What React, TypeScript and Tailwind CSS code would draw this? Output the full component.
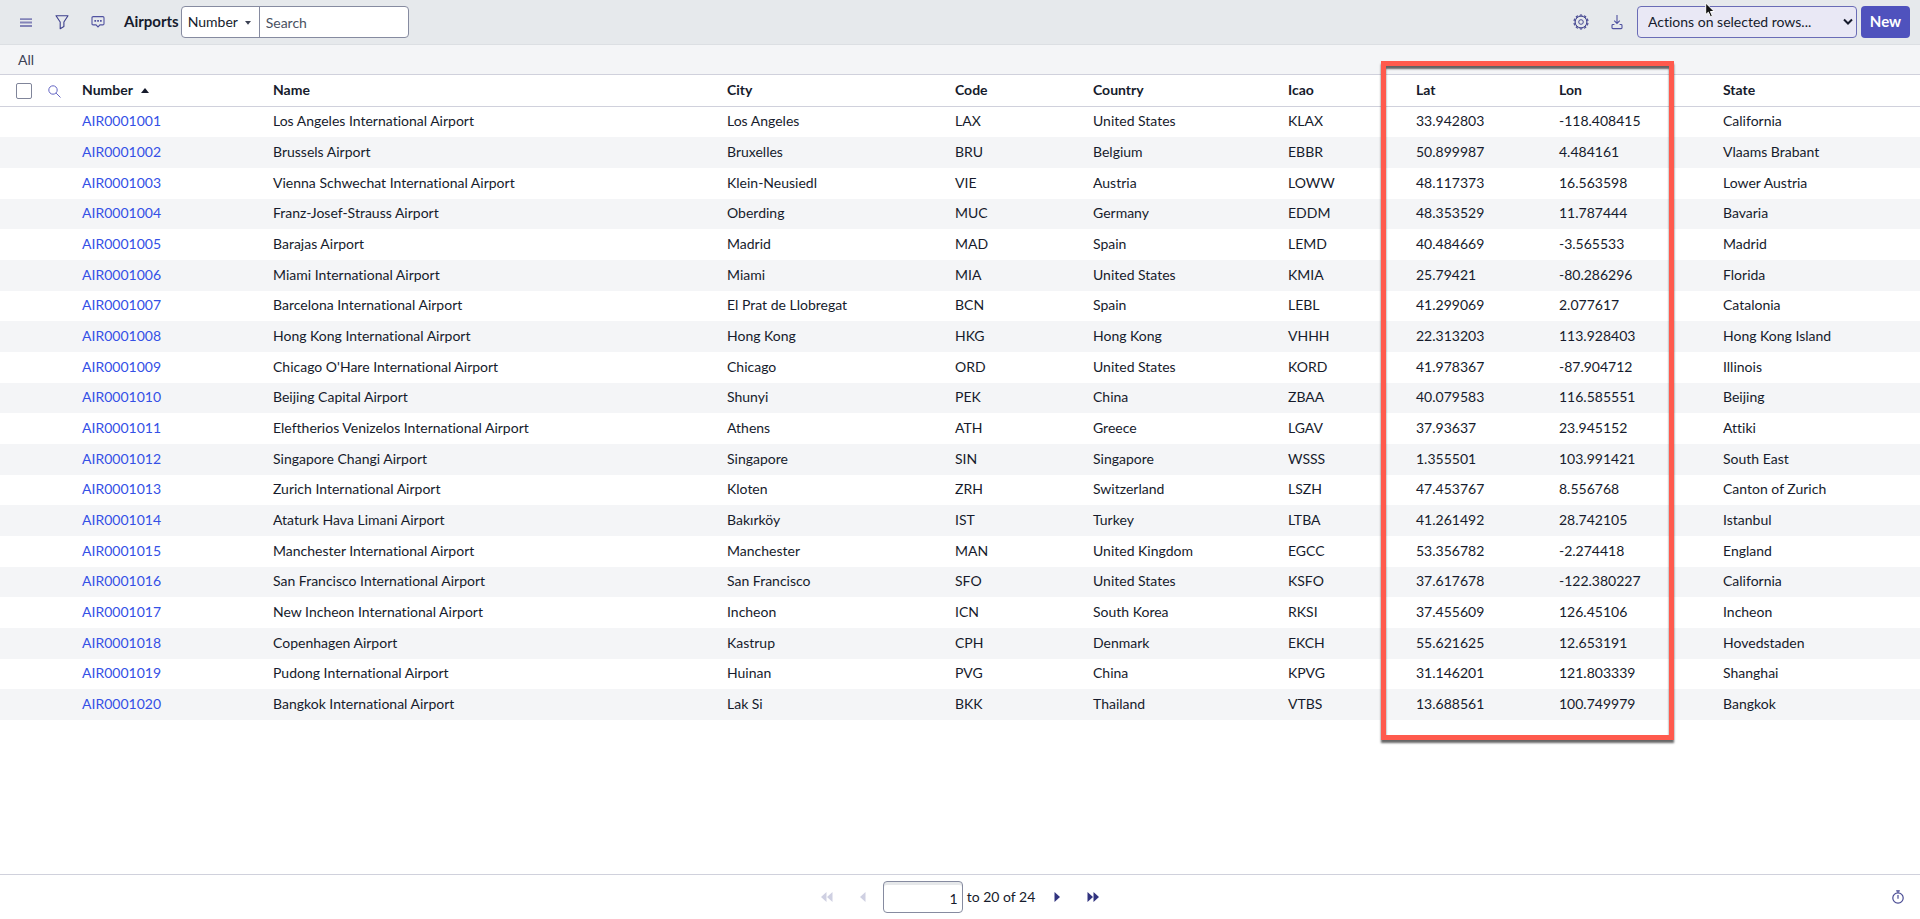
import React from "react";

const airports: string[][] = [
  ["AIR0001001", "Los Angeles International Airport", "Los Angeles", "LAX", "United States", "KLAX", "33.942803", "-118.408415", "California"],
  ["AIR0001002", "Brussels Airport", "Bruxelles", "BRU", "Belgium", "EBBR", "50.899987", "4.484161", "Vlaams Brabant"],
  ["AIR0001003", "Vienna Schwechat International Airport", "Klein-Neusiedl", "VIE", "Austria", "LOWW", "48.117373", "16.563598", "Lower Austria"],
  ["AIR0001004", "Franz-Josef-Strauss Airport", "Oberding", "MUC", "Germany", "EDDM", "48.353529", "11.787444", "Bavaria"],
  ["AIR0001005", "Barajas Airport", "Madrid", "MAD", "Spain", "LEMD", "40.484669", "-3.565533", "Madrid"],
  ["AIR0001006", "Miami International Airport", "Miami", "MIA", "United States", "KMIA", "25.79421", "-80.286296", "Florida"],
  ["AIR0001007", "Barcelona International Airport", "El Prat de Llobregat", "BCN", "Spain", "LEBL", "41.299069", "2.077617", "Catalonia"],
  ["AIR0001008", "Hong Kong International Airport", "Hong Kong", "HKG", "Hong Kong", "VHHH", "22.313203", "113.928403", "Hong Kong Island"],
  ["AIR0001009", "Chicago O'Hare International Airport", "Chicago", "ORD", "United States", "KORD", "41.978367", "-87.904712", "Illinois"],
  ["AIR0001010", "Beijing Capital Airport", "Shunyi", "PEK", "China", "ZBAA", "40.079583", "116.585551", "Beijing"],
  ["AIR0001011", "Eleftherios Venizelos International Airport", "Athens", "ATH", "Greece", "LGAV", "37.93637", "23.945152", "Attiki"],
  ["AIR0001012", "Singapore Changi Airport", "Singapore", "SIN", "Singapore", "WSSS", "1.355501", "103.991421", "South East"],
  ["AIR0001013", "Zurich International Airport", "Kloten", "ZRH", "Switzerland", "LSZH", "47.453767", "8.556768", "Canton of Zurich"],
  ["AIR0001014", "Ataturk Hava Limani Airport", "Bakırköy", "IST", "Turkey", "LTBA", "41.261492", "28.742105", "Istanbul"],
  ["AIR0001015", "Manchester International Airport", "Manchester", "MAN", "United Kingdom", "EGCC", "53.356782", "-2.274418", "England"],
  ["AIR0001016", "San Francisco International Airport", "San Francisco", "SFO", "United States", "KSFO", "37.617678", "-122.380227", "California"],
  ["AIR0001017", "New Incheon International Airport", "Incheon", "ICN", "South Korea", "RKSI", "37.455609", "126.45106", "Incheon"],
  ["AIR0001018", "Copenhagen Airport", "Kastrup", "CPH", "Denmark", "EKCH", "55.621625", "12.653191", "Hovedstaden"],
  ["AIR0001019", "Pudong International Airport", "Huinan", "PVG", "China", "KPVG", "31.146201", "121.803339", "Shanghai"],
  ["AIR0001020", "Bangkok International Airport", "Lak Si", "BKK", "Thailand", "VTBS", "13.688561", "100.749979", "Bangkok"],
];

const columns = ["Number", "Name", "City", "Code", "Country", "Icao", "Lat", "Lon", "State"];

function GearIcon() {
  const teeth = Array.from({ length: 10 }, (_, i) => i * 36);
  return (
    <svg width="16" height="16" viewBox="0 0 16 16" fill="none" stroke="#4a4c94" strokeWidth="1">
      <circle cx="8" cy="8" r="2.3" />
      <circle cx="8" cy="8" r="5.8" />
      {teeth.map((a) => (
        <path key={a} d="M7 2.2 7.2 .9h1.6L9 2.2" transform={`rotate(${a} 8 8)`} />
      ))}
    </svg>
  );
}

function Toolbar() {
  return (
    <header className="flex h-[45px] items-start border-b border-[#dcdfe3] bg-[#e6e9ec] pt-1.5 pr-2.5 pl-3">
      <div className="flex h-8 items-center gap-2">
        <button aria-label="List controls" className="flex size-7 items-center justify-center">
          <svg width="12" height="9" viewBox="0 0 12 9" fill="#8384b8">
            <path d="M0 .2h12v1.9H0zM0 3.6h12v1.9H0zM0 7h12v1.9H0z" />
          </svg>
        </button>
        <button aria-label="Filter" className="flex size-7 items-center justify-center">
          <svg width="14" height="16" viewBox="0 0 14 16" fill="none" stroke="#3d3f8c" strokeWidth="1.1">
            <path d="M1 1.8h12L8.9 8v4.6L5.2 14.7V8z" strokeLinejoin="round" />
          </svg>
        </button>
        <button aria-label="Activity stream" className="flex size-7 items-center justify-center">
          <svg width="14" height="14" viewBox="0 0 14 14" fill="none" stroke="#5052a0" strokeWidth="1.1">
            <path d="M2.2 1.6h9.6q1.2 0 1.2 1.2v5.9q0 1.2-1.2 1.2H9L7 12 5 9.900H2.200Q1 9.900 1 8.700V2.800q0-1.200 1.200-1.200z" />
            <path d="M3.4 5h1.700v1.700H3.400zM6.200 5h1.700v1.700H6.200zM9 5h1.700v1.700H9z" fill="#5052a0" stroke="none" />
          </svg>
        </button>
      </div>
      <h1 className="ml-3 flex h-8 items-center text-[15px] font-bold">Airports</h1>
      <div className="ml-0.5 flex h-8 rounded border border-[#868ba0] bg-white">
        <div className="relative flex border-r border-[#868ba0]">
          <select aria-label="Search field" className="w-[77px] appearance-none bg-transparent pl-1.5 outline-none">
            <option>Number</option>
          </select>
          <svg className="pointer-events-none absolute top-3.5 right-2" width="6" height="4" viewBox="0 0 6 4" fill="#3c4254">
            <path d="M0 0h6L3 3.700z" />
          </svg>
        </div>
        <input aria-label="Search" placeholder="Search" className="w-[148px] bg-transparent pt-0.5 pl-1.5 outline-none placeholder:text-[#4a5162]" />
      </div>
      <div className="ml-auto flex h-8 items-center">
        <button aria-label="Personalize list" className="flex size-9 items-center justify-center">
          <GearIcon />
        </button>
        <button aria-label="Export" className="flex size-9 items-center justify-center">
          <svg width="12" height="16" viewBox="0 0 12 16" fill="none" stroke="#5052a0" strokeWidth="1.1">
            <path d="M6 1v8.200M3.200 6.600 6 9.400l2.800-2.800" />
            <path d="M3.400 10.500H1.900Q1 10.500 1 11.400v2.300q0 .9.900.9h8.200q.9 0 .9-.9v-2.300q0-.9-.9-.9H8.600" />
          </svg>
        </button>
        <div className="relative ml-0.5 flex h-8">
          <select aria-label="Actions on selected rows" className="w-[220px] appearance-none rounded border border-[#6a6cb6] bg-[#e9e8f5] pl-2.5 outline-none">
            <option>Actions on selected rows...</option>
          </select>
          <svg className="pointer-events-none absolute top-3 right-1" width="10" height="8" viewBox="0 0 10 8" fill="none" stroke="#161b2c" strokeWidth="2">
            <path d="M1 1.500 5 5.500 9 1.500" />
          </svg>
        </div>
        <button className="ml-1 h-8 w-[49px] rounded bg-[#4f52bd] text-[15px] font-bold text-white">New</button>
      </div>
    </header>
  );
}

function AirportTable() {
  return (
    <table className="w-full table-fixed border-collapse text-left">
      <colgroup>
        <col className="w-[46px]" />
        <col className="w-[28px]" />
        <col className="w-[191px]" />
        <col className="w-[454px]" />
        <col className="w-[228px]" />
        <col className="w-[138px]" />
        <col className="w-[195px]" />
        <col className="w-[128px]" />
        <col className="w-[143px]" />
        <col className="w-[164px]" />
        <col className="w-[205px]" />
      </colgroup>
      <thead>
        <tr className="h-8 shadow-[inset_0_-1px_0_#d0d1dc]">
          <th className="p-0 pl-4">
            <input type="checkbox" aria-label="Select all" className="block size-4 appearance-none rounded-xs border border-[#80859a] bg-white" />
          </th>
          <th className="p-0">
            <button aria-label="Search columns" className="ml-0.5 block">
              <svg width="13" height="13" viewBox="0 0 13 13" fill="none" stroke="#6466c4" strokeWidth="1">
                <circle cx="5" cy="5" r="4.200" />
                <path d="m8.100 8.100 4.400 4.400" />
              </svg>
            </button>
          </th>
          {columns.map((name, i) => (
            <th key={name} className="p-0 pb-0.5 pl-2 font-bold" aria-sort={i === 0 ? "ascending" : undefined}>
              <span className="flex items-center gap-2">
                {name}
                {i === 0 && (
                  <svg width="8" height="5" viewBox="0 0 8 5" fill="#161b2c">
                    <path d="M4 0 8 5H0z" />
                  </svg>
                )}
              </span>
            </th>
          ))}
        </tr>
      </thead>
      <tbody>
        {airports.map((row) => (
          <tr key={row[0]} className="h-[31px] even:bg-[#f4f5f7] nth-[3n+1]:h-[30px]">
            <td className="p-0" />
            <td className="p-0" />
            {row.map((value, i) => (
              <td key={i} className="truncate p-0 pb-0.5 pl-2">
                {i === 0 ? (
                  <a href="#" className="text-[#3450e6]">{value}</a>
                ) : (
                  value
                )}
              </td>
            ))}
          </tr>
        ))}
      </tbody>
    </table>
  );
}

function Pager() {
  return (
    <footer className="grid h-[45px] grid-cols-[1fr_auto_1fr] items-center border-t border-[#d0d1dc]">
      <span />
      <div className="flex items-center pl-1">
        <button aria-label="First page" className="flex h-8 w-9 items-center justify-center" disabled>
          <svg width="12" height="10" viewBox="0 0 12 10" fill="#cfd0e2">
            <path d="M5.500 0v10L0 5zM11.500 0v10L6 5z" />
          </svg>
        </button>
        <button aria-label="Previous page" className="flex h-8 w-9 items-center justify-center" disabled>
          <svg width="6" height="10" viewBox="0 0 6 10" fill="#cfd0e2">
            <path d="M5.500 0v10L0 5z" />
          </svg>
        </button>
        <input aria-label="Go to row" defaultValue="1" className="ml-0.5 h-8 w-20 rounded border border-[#868ba0] bg-white pt-0.5 pr-1 text-right shadow-[inset_0_3px_0_#e6e8ea] outline-none" />
        <span className="mr-2 ml-1">to 20 of 24</span>
        <button aria-label="Next page" className="flex h-8 w-7 items-center justify-center">
          <svg width="6" height="10" viewBox="0 0 6 10" fill="#31337f">
            <path d="M.5 0v10L6 5z" />
          </svg>
        </button>
        <button aria-label="Last page" className="flex h-8 w-11 items-center justify-center">
          <svg width="12" height="10" viewBox="0 0 12 10" fill="#31337f">
            <path d="M.5 0v10L6 5zM6.500 0v10L12 5z" />
          </svg>
        </button>
      </div>
      <button aria-label="Response time" className="mr-4 justify-self-end">
        <svg width="12" height="14" viewBox="0 0 12 14" fill="none" stroke="#4a4c94" strokeWidth="1.200">
          <circle cx="6" cy="8" r="5.200" />
          <path d="M4.200 .8h3.600M6 .8v2M6 5v3.800" />
        </svg>
      </button>
    </footer>
  );
}

export default function App() {
  return (
    <div className="relative flex min-h-screen flex-col bg-white font-['Lato',sans-serif] text-sm text-[#161b2c] [font-variant-ligatures:none]">
      <Toolbar />
      <nav className="flex h-[30px] items-center border-b border-[#d0d1dc] bg-[#f4f5f7] pl-[18px]">
        <a href="#" className="text-[#3c4254]">All</a>
      </nav>
      <main className="relative mb-auto">
        <AirportTable />
        <div className="pointer-events-none absolute -top-3.5 -bottom-5 left-[71.93%] w-[15.26%] border-5 border-[#ff5a4d] shadow-[0_3px_2px_#00000099,inset_0_3px_2px_#00000099]" />
      </main>
      <Pager />
      <svg className="pointer-events-none absolute top-0.5 left-[88.8%]" width="11" height="16" viewBox="0 0 11 16" fill="#111" stroke="#fff" strokeWidth="1">
        <path d="M.7 1v11.600l2.700-2.400 2 4.600 2-.9-2-4.400h3.800z" />
      </svg>
    </div>
  );
}
